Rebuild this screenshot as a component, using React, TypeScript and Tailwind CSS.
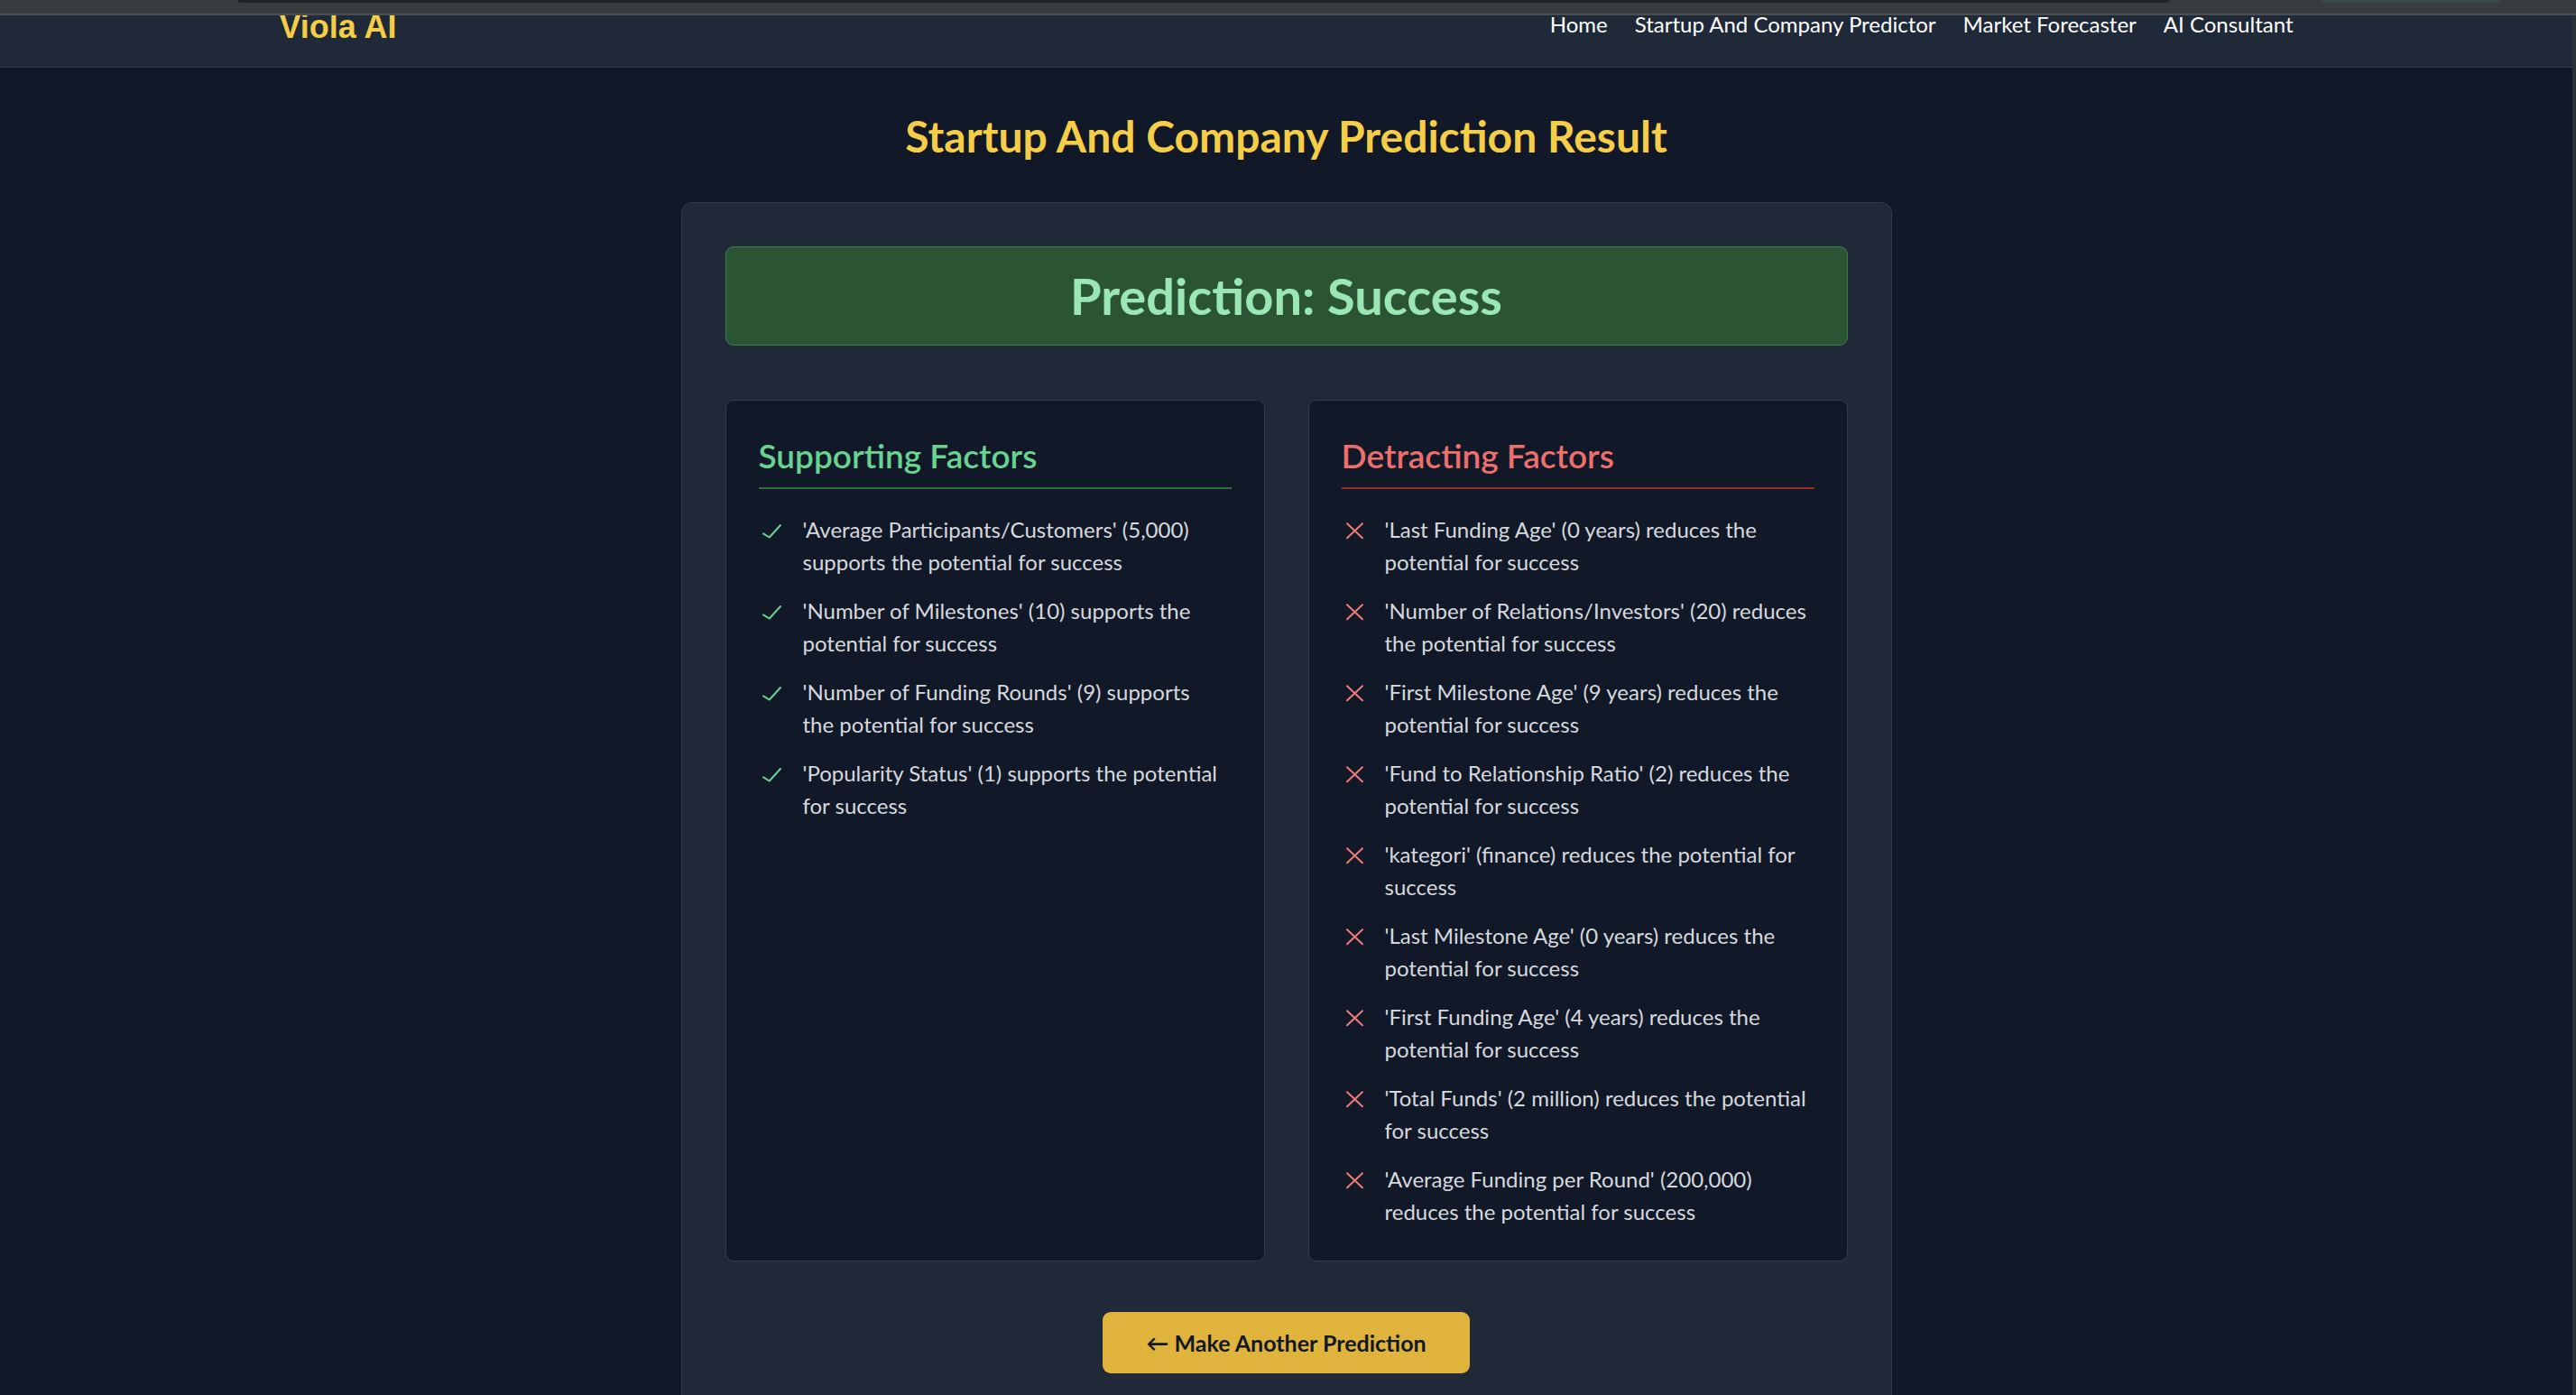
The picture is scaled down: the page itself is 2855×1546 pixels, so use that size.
import React from 'react';

const SUPPORTING: string[] = [
  "'Average Participants/Customers' (5,000) supports the potential for success",
  "'Number of Milestones' (10) supports the potential for success",
  "'Number of Funding Rounds' (9) supports the potential for success",
  "'Popularity Status' (1) supports the potential for success",
];

const DETRACTING: string[] = [
  "'Last Funding Age' (0 years) reduces the potential for success",
  "'Number of Relations/Investors' (20) reduces the potential for success",
  "'First Milestone Age' (9 years) reduces the potential for success",
  "'Fund to Relationship Ratio' (2) reduces the potential for success",
  "'kategori' (finance) reduces the potential for success",
  "'Last Milestone Age' (0 years) reduces the potential for success",
  "'First Funding Age' (4 years) reduces the potential for success",
  "'Total Funds' (2 million) reduces the potential for success",
  "'Average Funding per Round' (200,000) reduces the potential for success",
];

const NAV_LINKS = ['Home', 'Startup And Company Predictor', 'Market Forecaster', 'AI Consultant'];

const CheckMark = () => (
  <svg width="49" height="36" viewBox="0 0 49 36" fill="none" className="shrink-0">
    <polyline
      points="5,22.3 11.7,26.5 24,13"
      stroke="#68d391"
      strokeWidth="2"
      strokeLinecap="round"
      strokeLinejoin="round"
    />
  </svg>
);

const CrossMark = () => (
  <svg width="48" height="36" viewBox="0 0 48 36" fill="none" className="shrink-0">
    <path d="M6 11.3 L23 27.3 M23 11.3 L6 27.3" stroke="#f07c7a" strokeWidth="2" strokeLinecap="round" />
  </svg>
);

type FactorColumnProps = {
  title: string;
  items: string[];
  kind: 'support' | 'detract';
};

const FactorColumn = ({ title, items, kind }: FactorColumnProps) => (
  <div className="bg-[#111827] border border-[#343b48] rounded-[9px] p-[36px]">
    <h3
      className={`text-[37px] leading-[50px] font-semibold pb-[10px] border-b-2 mb-[27px] ${
        kind === 'support' ? 'text-[#68d391] border-[#2f6f3f]' : 'text-[#ec6f6d] border-[#9b2c2c]'
      }`}
    >
      {title}
    </h3>
    <ul className="flex flex-col gap-[18px]">
      {items.map((text) => (
        <li key={text} className="flex pr-[7px]">
          {kind === 'support' ? <CheckMark /> : <CrossMark />}
          <span className="text-[24px] leading-[36px] text-[#d6d9de]">{text}</span>
        </li>
      ))}
    </ul>
  </div>
);

export default function App() {
  return (
    <div className="min-h-screen bg-[#111827] font-[Lato,sans-serif] flex flex-col">
      {/* browser chrome strip */}
      <div className="h-[15px] bg-[#373c3e] flex items-start shrink-0">
        <div className="ml-[264px] w-[2140px] h-[3px] bg-[#202324] rounded-b-[6px]" />
        <div className="ml-[169px] w-[198px] h-[3px] bg-[#3a4650] rounded-b-[6px]" />
      </div>
      <div className="h-[2px] bg-[#4a4e50] shrink-0" />

      <div className="flex flex-1">
        <div className="flex-1 flex flex-col">
          {/* Navbar */}
          <header className="h-[58px] bg-[#1f2937] border-b border-[#333a46] overflow-hidden shrink-0">
            <div className="w-[2232px] mx-auto flex items-start justify-between">
              <span className="mt-[-5.5px] text-[36px] leading-[36px] font-bold text-[#f5cd47] font-['Liberation_Sans',Arial,sans-serif]">
                Viola AI
              </span>
              <nav className="flex gap-[30px] text-[24px] leading-[19px] text-white">
                {NAV_LINKS.map((l) => (
                  <a key={l} href="#" className="whitespace-nowrap">
                    {l}
                  </a>
                ))}
              </nav>
            </div>
          </header>

          {/* Main */}
          <main className="flex flex-col items-center pt-[49px]">
            <h1 className="text-[48px] leading-[54px] font-bold text-[#f5cd47]">
              Startup And Company Prediction Result
            </h1>

            <div className="mt-[46px] w-[1342px] bg-[#1f2937] border border-[#343b48] rounded-[12px] p-[48px] flex flex-col">
              <div className="h-[110px] bg-[#2a5434] border border-[#3a7d47] rounded-[9px] flex items-center justify-center">
                <h2 className="text-[56px] leading-[1.2] font-bold text-[#9ae6b4]">Prediction: Success</h2>
              </div>

              <div className="mt-[60px] grid grid-cols-2 gap-[48px]">
                <FactorColumn title="Supporting Factors" items={SUPPORTING} kind="support" />
                <FactorColumn title="Detracting Factors" items={DETRACTING} kind="detract" />
              </div>

              <button className="mt-[56px] self-center bg-[#e0b43c] text-[#111827] font-bold text-[25px] leading-[36px] px-[48px] py-[16px] rounded-[9px]">
                ← Make Another Prediction
              </button>
            </div>
          </main>
        </div>
        <div className="w-[4px] bg-[#2b3038] shrink-0" />
      </div>
    </div>
  );
}
